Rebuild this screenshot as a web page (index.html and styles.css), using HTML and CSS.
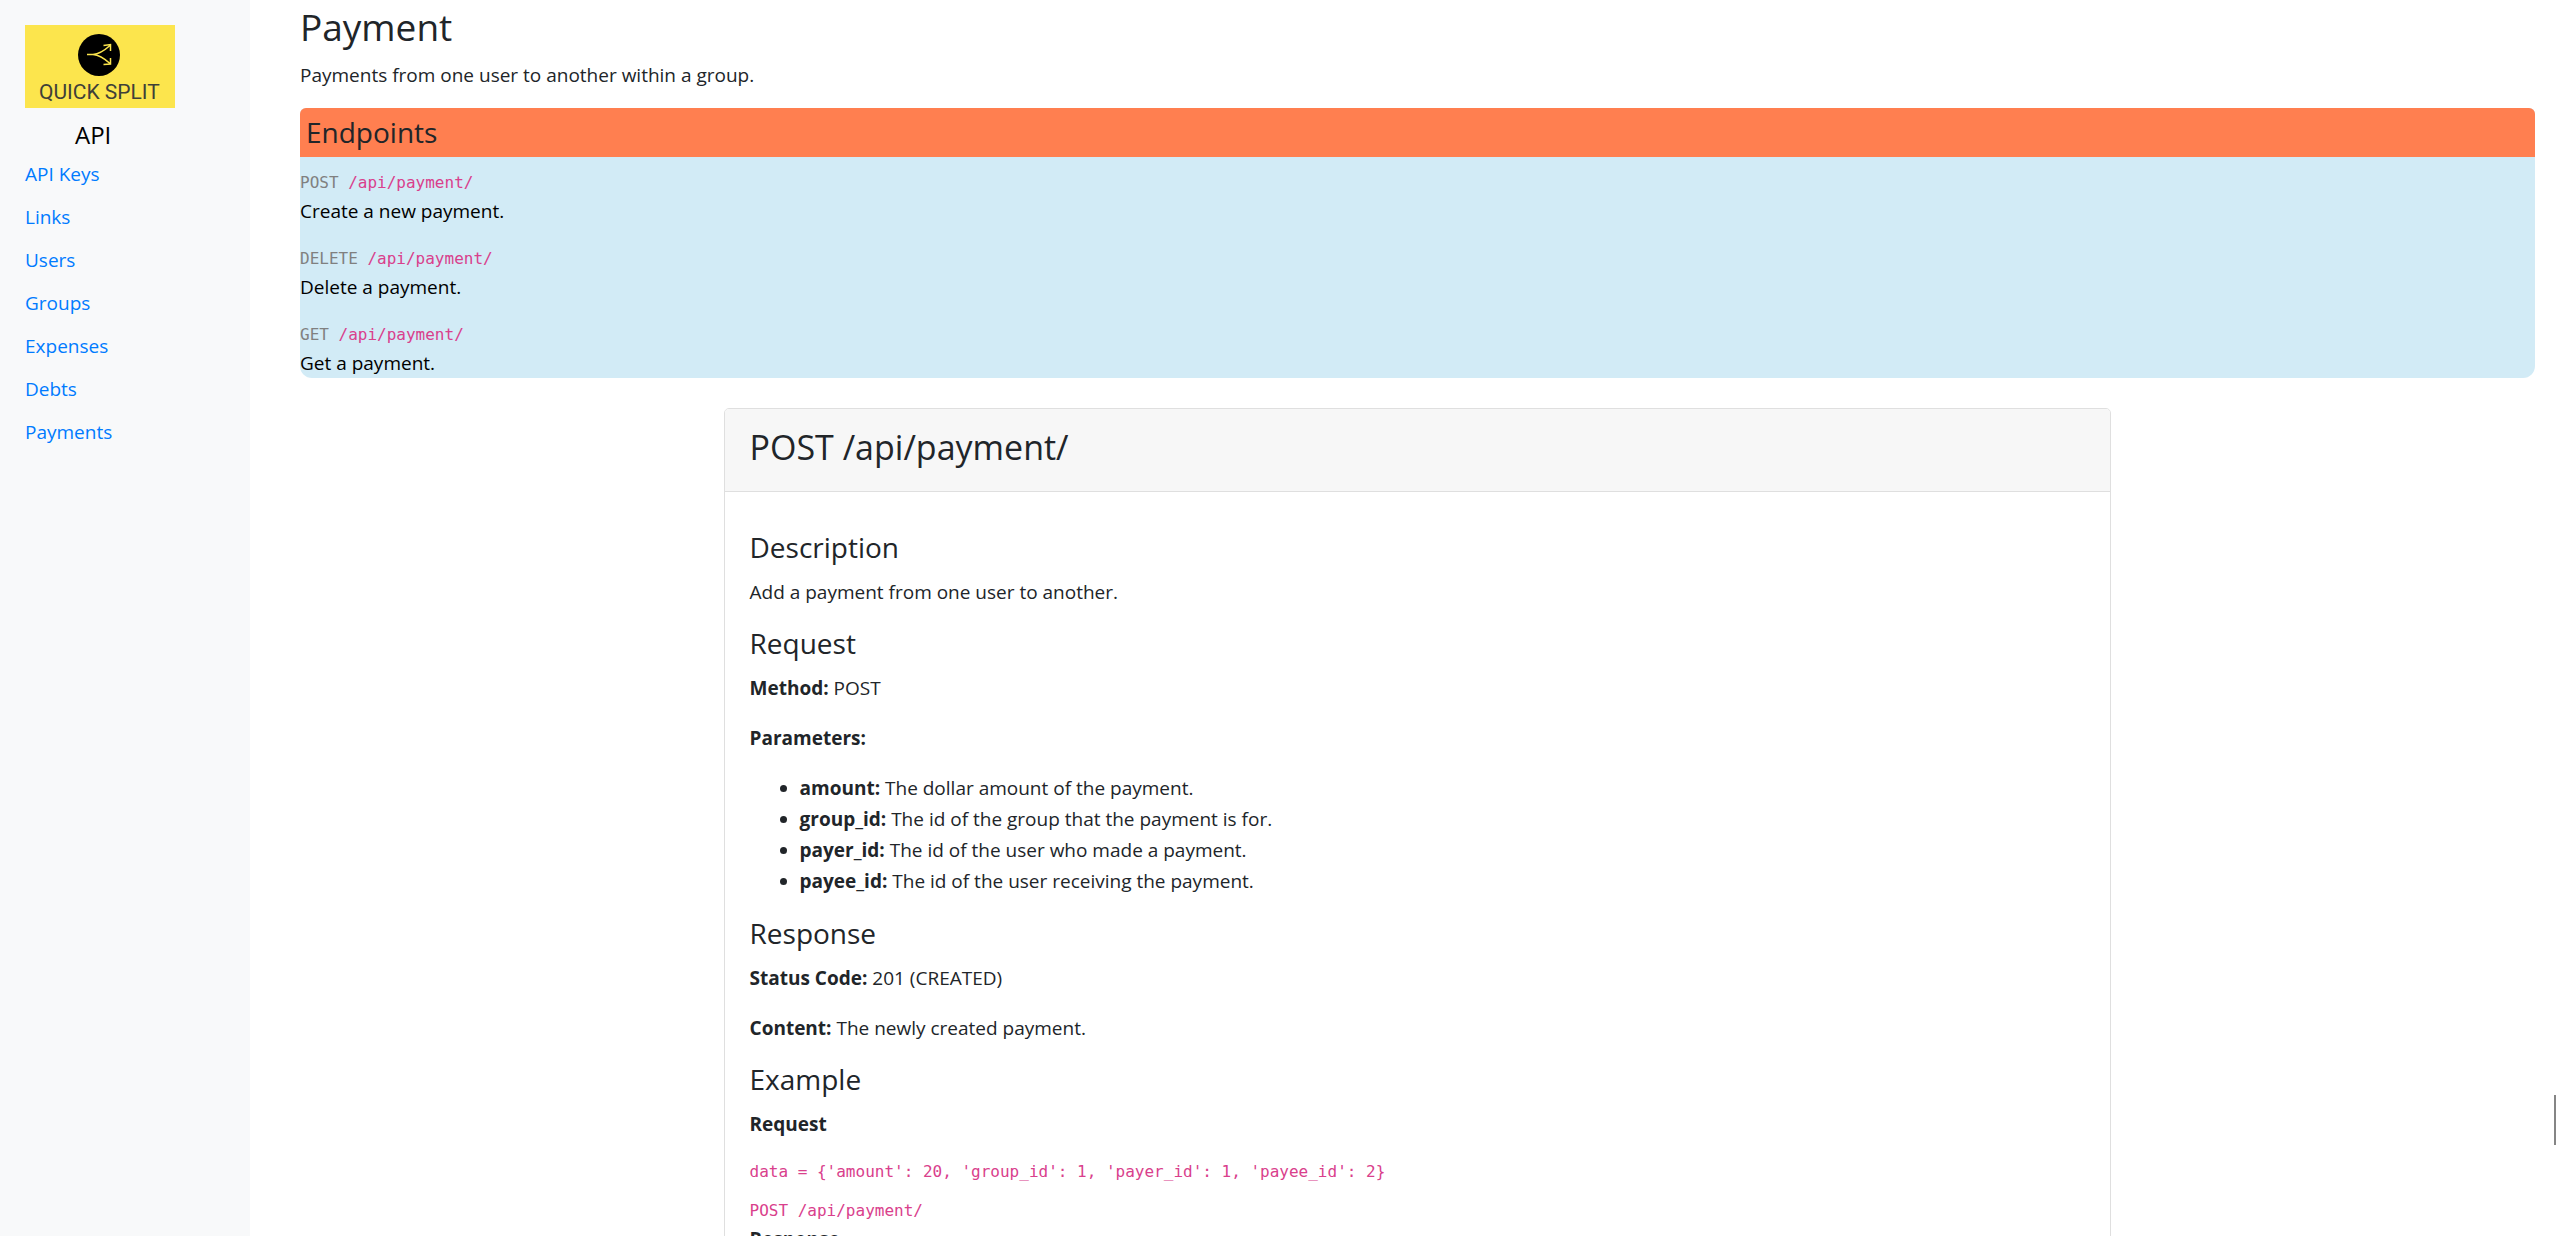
FILE: index.html
```html
<!DOCTYPE html>
<html lang="en">
<head>
<meta charset="utf-8">
<meta name="viewport" content="width=device-width, initial-scale=1">
<title>Quick Split API</title>
<link rel="stylesheet" href="styles.css">
</head>
<body>
<div class="page">
  <nav class="sidebar" aria-label="API sections">
    <svg class="logo" viewBox="0 0 150 83" role="img" aria-label="Quick Split">
      <rect width="150" height="83" fill="#fce54d"/>
      <circle cx="74" cy="30" r="21" fill="#000"/>
      <g fill="none" stroke="#fce54d" stroke-width="1.5">
        <path d="M62 29.5H68C75 29 80 25 85 20.500M68 29.500C75 30 80 34 85 38.500M78.500 20.500L85.500 19.500V26M78.500 39.500L85.500 39V33"/>
      </g>
      <text class="logo-text" x="14" y="74">QUICK SPLIT</text>
    </svg>
    <h4 class="sidebar-title">API</h4>
    <ul class="nav-list">
      <li><a href="#keys">API Keys</a></li>
      <li><a href="#links">Links</a></li>
      <li><a href="#users">Users</a></li>
      <li><a href="#groups">Groups</a></li>
      <li><a href="#expenses">Expenses</a></li>
      <li><a href="#debts">Debts</a></li>
      <li><a href="#payments">Payments</a></li>
    </ul>
  </nav>
  <main class="content" id="payments">
    <h2 class="page-title">Payment</h2>
    <p class="intro">Payments from one user to another within a group.</p>
    <section class="endpoints">
      <h4 class="endpoints-title">Endpoints</h4>
      <div class="endpoints-list">
        <div><code><span class="verb">POST</span> /api/payment/</code><div>Create a new payment.</div></div>
        <div><code><span class="verb">DELETE</span> /api/payment/</code><div>Delete a payment.</div></div>
        <div><code><span class="verb">GET</span> /api/payment/</code><div>Get a payment.</div></div>
      </div>
    </section>
    <article class="card">
      <header class="card-header"><h3 class="card-title">POST /api/payment/</h3></header>
      <div class="card-body">
        <h4>Description</h4>
        <p>Add a payment from one user to another.</p>
        <h4>Request</h4>
        <p><b>Method:</b> POST</p>
        <p><b>Parameters:</b></p>
        <ul class="params">
          <li><b>amount:</b> The dollar amount of the payment.</li>
          <li><b>group_id:</b> The id of the group that the payment is for.</li>
          <li><b>payer_id:</b> The id of the user who made a payment.</li>
          <li><b>payee_id:</b> The id of the user receiving the payment.</li>
        </ul>
        <h4>Response</h4>
        <p><b>Status Code:</b> 201 (CREATED)</p>
        <p><b>Content:</b> The newly created payment.</p>
        <h4>Example</h4>
        <p><b>Request</b></p>
        <code class="example-data">data = {'amount': 20, 'group_id': 1, 'payer_id': 1, 'payee_id': 2}</code>
        <code>POST /api/payment/</code>
        <p><b>Response</b></p>
      </div>
    </article>
  </main>
</div>
<div class="scroll-thumb"></div>
</body>
</html>
```
FILE: styles.css
```css
* { box-sizing: border-box; }
body {
  margin: 0;
  height: 100vh;
  overflow: hidden;
  background: #fff;
  color: #212529;
  font: 19px/30px "Open Sans", "Segoe UI", sans-serif;
}
h2, h3, h4 { margin: 0; font-weight: 400; }
h4 { margin-bottom: 14px; font-size: 28px; line-height: 32px; }
p { margin: 0 0 20px; }
code {
  display: block;
  color: #d9408c;
  font: 16px/26px "DejaVu Sans Mono", monospace;
}
a { color: #007bff; text-decoration: none; }

.page { display: flex; }
.sidebar {
  flex: 0 0 250px;
  height: 100vh;
  padding: 25px;
  background: #f8f9fa;
}
.logo { display: block; width: 150px; }
.logo-text { fill: #3f4038; font: 21px Roboto, sans-serif; }
.sidebar-title { margin: 11px 0 8px 50px; color: #000; font-size: 24px; }
.nav-list { margin: 0; padding: 0; list-style: none; }
.nav-list li { margin-bottom: 13px; }

.content { flex: 1; min-width: 0; padding: 3px 25px 0 50px; }
.page-title { margin-bottom: 9px; font-size: 37px; line-height: 48px; }
.intro { margin-bottom: 18px; }

.endpoints {
  margin-bottom: 30px;
  border-radius: 6px 6px 12px 12px;
  background: #d2ebf6;
  color: #000;
}
.endpoints-title {
  margin: 0;
  padding: 8px 6px 9px;
  border-radius: 6px 6px 0 0;
  background: #ff7f50;
  color: #212529;
}
.endpoints-list { display: grid; gap: 20px; padding-top: 13px; }
.verb { color: gray; }

.card {
  width: 62.1%;
  margin: 0 auto;
  border: 1px solid #dfdfdf;
  border-radius: 5px;
}
.card-header {
  padding: 17px 25px 23px;
  border-bottom: 1px solid #dfdfdf;
  border-radius: 4px 4px 0 0;
  background: #f7f7f7;
}
.card-title { font-size: 34px; line-height: 42px; }
.card-body { padding: 39px 25px 25px; }
.params { margin: 0 0 20px; padding-left: 50px; line-height: 31px; }
.example-data { margin-bottom: 13px; }

.scroll-thumb {
  position: fixed;
  right: 4px;
  top: 1095px;
  width: 2px;
  height: 50px;
  background: #858585;
}
```
